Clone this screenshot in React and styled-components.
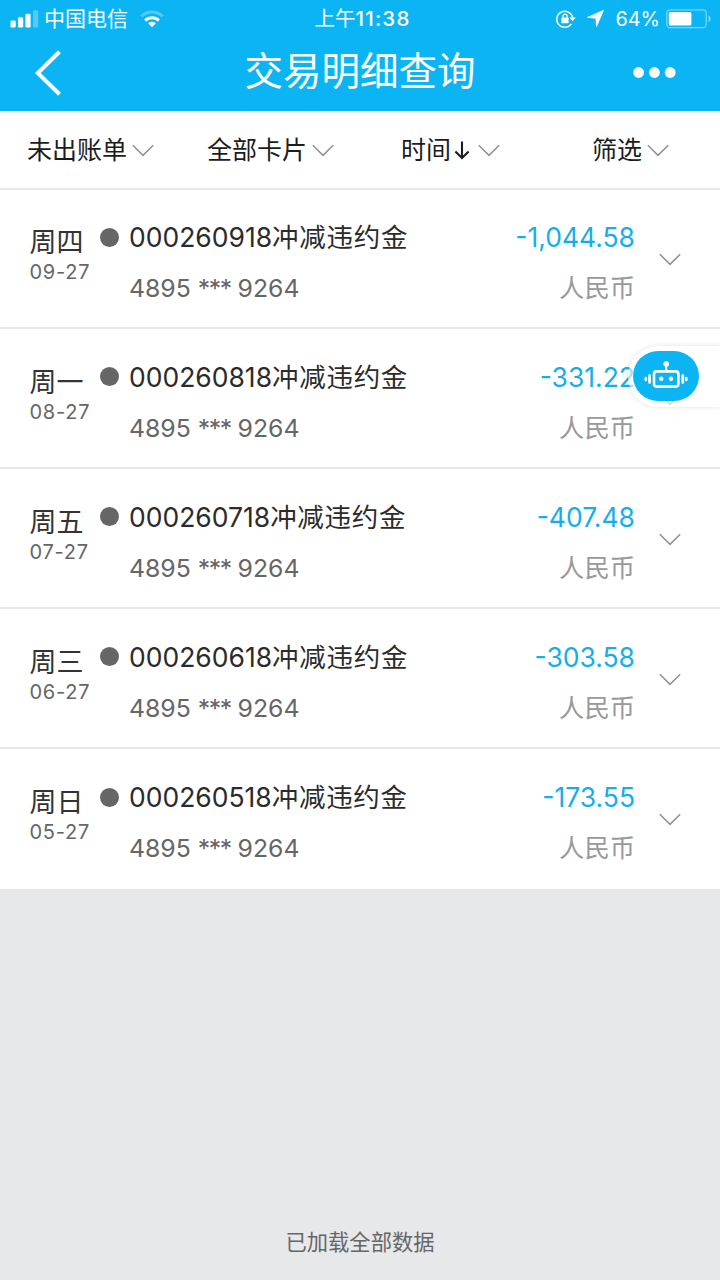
import React from 'react';
import styled, { createGlobalStyle } from 'styled-components';

const BLUE = '#0bb5f3';

const GlobalStyle = createGlobalStyle`
  * {
    box-sizing: border-box;
  }
  body {
    margin: 0;
    background: #e7e8ea;
    font-family: Inter, "Noto Sans CJK SC", sans-serif;
  }
  svg {
    display: block;
    flex: none;
  }
`;

const Screen = styled.div`
  position: relative;
  display: flex;
  flex-direction: column;
  width: 720px;
  height: 1280px;
  overflow: hidden;
  white-space: nowrap;
`;

const Header = styled.header`
  height: 111px;
  background: ${BLUE};
  color: #fff;
`;

const StatusBar = styled.div`
  display: grid;
  grid-template-columns: 1fr auto 1fr;
  align-items: center;
  height: 36px;
  padding: 0 9px 0 10px;
`;

const StatusGroup = styled.div`
  display: flex;
  align-items: center;
  height: 36px;
  line-height: 36px;
  justify-content: ${(props) => (props.$end ? 'flex-end' : 'flex-start')};
`;

const Carrier = styled.span`
  margin: 1px 12px 0 5px;
  font-size: 21px;
`;

const Clock = styled.div`
  padding: 1px 0 0 4px;
  font-size: 20.5px;
  line-height: 36px;
`;

const Digits = styled.span`
  font-weight: 500;
  letter-spacing: 1.2px;
`;

const Battery = styled.span`
  margin: 1px 6px 0 12px;
  font-size: 19.8px;
`;

const NavBar = styled.div`
  display: grid;
  grid-template-columns: 1fr auto 1fr;
  align-items: center;
  height: 74px;
  padding: 0 44px 0 34px;
`;

const Title = styled.h1`
  margin: 0 0 4px 10px;
  font-size: 38.5px;
  font-weight: 400;
  line-height: 60px;
`;

const NavEnd = styled.div`
  display: flex;
  justify-content: flex-end;
  padding-bottom: 2px;
`;

const FilterBar = styled.nav`
  display: flex;
  height: 77px;
  background: #fff;
`;

const Filter = styled.div`
  display: flex;
  flex: 1;
  align-items: center;
  justify-content: center;
  gap: 5px;
  padding: 1px 0 0 1px;
  color: #1c1c1c;
  font-size: 25px;
  line-height: 36px;
`;

const List = styled.ul`
  margin: 0;
  padding: 0;
  height: 701px;
  list-style: none;
  background: #fff;
`;

const Row = styled.li`
  display: flex;
  height: 140.2px;
  padding: 30px 39.5px 0 29.5px;
  border-top: 2px solid #e8e8e9;

  &:first-child {
    height: 138.6px;
    padding-top: 29px;
  }
`;

const Day = styled.div`
  width: 70.5px;
  padding-top: 6px;
`;

const Weekday = styled.div`
  color: #333;
  font-size: 27px;
  line-height: 36px;
`;

const DateText = styled.div`
  color: #666;
  font-size: 20px;
  letter-spacing: 0.75px;
  line-height: 22px;
`;

const Dot = styled.span`
  flex: none;
  width: 19px;
  height: 19px;
  margin: 8.5px 10px 0 0;
  border-radius: 50%;
  background: #666;
`;

const Detail = styled.div`
  flex: 1;
`;

const Name = styled.div`
  color: #2b2b2b;
  font-size: 26.5px;
  line-height: 36px;
`;

const Label = styled.span`
  letter-spacing: 0.7px;
`;

const Card = styled.div`
  margin-top: 15px;
  color: #666;
  font-size: 24.8px;
  line-height: 36px;
`;

const Mask = styled.span`
  letter-spacing: -1.5px;
`;

const Money = styled.div`
  text-align: right;
`;

const Amount = styled.div`
  color: #16aeea;
  font-size: 26.5px;
  line-height: 36px;
`;

const Currency = styled.div`
  margin-top: 15px;
  color: #999;
  font-size: 25.3px;
  line-height: 36px;
`;

const Expand = styled.div`
  padding-top: 34px;
  margin-left: 23.5px;
`;

const Footer = styled.footer`
  margin-top: auto;
  padding-bottom: 20px;
  color: #666;
  font-size: 21.3px;
  line-height: 36px;
  text-align: center;
`;

// Sits over the list, stuck to the right edge
const Assistant = styled.div`
  position: absolute;
  top: 346px;
  right: 0;
  width: 92px;
  height: 61px;
  padding: 5px;
  border-radius: 31px 0 0 31px;
  background: rgba(255, 255, 255, 0.6);
  box-shadow: 0 0 5px rgba(0, 0, 0, 0.12);
`;

const Bubble = styled.div`
  display: flex;
  align-items: center;
  justify-content: center;
  width: 66px;
  height: 50px;
  padding-bottom: 2px;
  border-radius: 25px;
  background: ${BLUE};
`;

const Chevron = () => (
  <svg width="22" height="13" viewBox="0 0 22 13" fill="none">
    <path d="M0.8 1.2 L11 11.4 L21.2 1.2" stroke="#8f9198" strokeWidth="1.5" />
  </svg>
);

const SortIcon = styled.svg`
  margin: 0 3px 0 -2px;
`;

const SortArrow = () => (
  <SortIcon width="16" height="20" viewBox="0 0 16 20" fill="none">
    <path d="M8 1.5 V18 M1.4 11.5 L8 18 L14.6 11.5" stroke="#1c1c1c" strokeWidth="2.1" />
  </SortIcon>
);

const SignalIcon = () => (
  <svg width="29" height="18" viewBox="0 0 29 18" fill="#fff">
    <rect x="0.5" y="10.5" width="5.2" height="7" rx="1.3" />
    <rect x="8" y="7.2" width="5.2" height="10.3" rx="1.3" />
    <rect x="15.4" y="3.7" width="5.2" height="13.8" rx="1.3" />
    <rect x="23" y="0.3" width="5.2" height="17.2" rx="1.3" opacity="0.3" />
  </svg>
);

const WifiIcon = () => (
  <svg width="24" height="18" viewBox="0 0 24 18" fill="none" stroke="#fff" strokeWidth="3">
    <path d="M1.3 6.5 A15.2 15.2 0 0 1 22.7 6.5" opacity="0.3" />
    <path d="M5.2 10.6 A9.6 9.6 0 0 1 18.8 10.6" />
    <path d="M12 17.2 L8.1 13.3 A5.5 5.5 0 0 1 15.9 13.3 Z" fill="#fff" stroke="none" />
  </svg>
);

const RotationLockIcon = () => (
  <svg width="20" height="18" viewBox="0 0 20 18" fill="none" stroke="#fff">
    <path d="M15.4 13.8 A8 8 0 1 1 16.6 7.8" strokeWidth="1.5" />
    <path d="M13.4 7.4 H19.8 L16.6 11.2 Z" fill="#fff" stroke="none" />
    <rect x="5.4" y="7.6" width="7.2" height="5.6" rx="0.7" fill="#fff" stroke="none" />
    <path d="M6.9 8 V6.3 A2.1 2.1 0 0 1 11.1 6.3 V8" strokeWidth="1.2" />
  </svg>
);

const PointerIcon = styled.svg`
  margin-left: 11px;
`;

const LocationIcon = () => (
  <PointerIcon width="17" height="17" viewBox="0 0 17 17" fill="#fff">
    <path d="M16.4 0.4 L9.6 16.4 L8.9 8.2 L0.5 7.4 Z" stroke="#fff" strokeWidth="0.8" strokeLinejoin="round" />
  </PointerIcon>
);

const BatteryIcon = () => (
  <svg width="45" height="20" viewBox="0 0 45 20" fill="none">
    <rect x="0.8" y="0.8" width="39.4" height="17.9" rx="3.5" stroke="#fff" strokeOpacity="0.45" strokeWidth="1.3" />
    <rect x="2.8" y="3" width="22.6" height="13.5" rx="1.5" fill="#fff" />
    <path d="M42.6 6.5 C45.2 7.5 45.2 12 42.6 13 Z" fill="#fff" fillOpacity="0.5" />
  </svg>
);

const BackIcon = () => (
  <svg width="28" height="46" viewBox="0 0 28 46" fill="none">
    <path d="M25.5 1.8 L3.8 23 L25.5 44.2" stroke="#fff" strokeWidth="4" />
  </svg>
);

const MoreIcon = () => (
  <svg width="43" height="11" viewBox="0 0 43 11" fill="#fff">
    <circle cx="5.6" cy="5.5" r="5.4" />
    <circle cx="21.4" cy="5.5" r="5.4" />
    <circle cx="37.2" cy="5.5" r="5.4" />
  </svg>
);

const RobotIcon = () => (
  <svg width="44" height="28" viewBox="0 0 44 28" fill="none" stroke="#fff">
    <rect x="10" y="10.4" width="24.4" height="15.2" rx="2.5" strokeWidth="2.6" />
    <path d="M22.2 4 V10" strokeWidth="2" />
    <circle cx="22.2" cy="3" r="2.8" fill="#fff" stroke="none" />
    <circle cx="17.3" cy="17.8" r="2.2" fill="#fff" stroke="none" />
    <circle cx="27" cy="17.8" r="2.2" fill="#fff" stroke="none" />
    <path d="M5.6 14.6 V21.4 M38.8 14.6 V21.4" strokeWidth="2.8" strokeLinecap="round" />
    <path d="M1.8 17 V19 M42.3 17 V19" strokeWidth="2.6" strokeLinecap="round" />
  </svg>
);

const transactions = [
  { weekday: '周四', date: '09-27', code: '000260918', amount: '-1,044.58' },
  { weekday: '周一', date: '08-27', code: '000260818', amount: '-331.22' },
  { weekday: '周五', date: '07-27', code: '000260718', amount: '-407.48' },
  { weekday: '周三', date: '06-27', code: '000260618', amount: '-303.58' },
  { weekday: '周日', date: '05-27', code: '000260518', amount: '-173.55' },
];

function Transaction(props) {
  const { item } = props;
  return (
    <Row>
      <Day>
        <Weekday>{item.weekday}</Weekday>
        <DateText>{item.date}</DateText>
      </Day>
      <Dot />
      <Detail>
        <Name>
          {item.code}
          <Label>冲减违约金</Label>
        </Name>
        <Card>
          4895 <Mask>***</Mask> 9264
        </Card>
      </Detail>
      <Money>
        <Amount>{item.amount}</Amount>
        <Currency>人民币</Currency>
      </Money>
      <Expand>
        <Chevron />
      </Expand>
    </Row>
  );
}

function App() {
  return (
    <Screen>
      <GlobalStyle />
      <Header>
        <StatusBar>
          <StatusGroup>
            <SignalIcon />
            <Carrier>中国电信</Carrier>
            <WifiIcon />
          </StatusGroup>
          <Clock>
            上午
            <Digits>11:38</Digits>
          </Clock>
          <StatusGroup $end>
            <RotationLockIcon />
            <LocationIcon />
            <Battery>64%</Battery>
            <BatteryIcon />
          </StatusGroup>
        </StatusBar>
        <NavBar>
          <BackIcon />
          <Title>交易明细查询</Title>
          <NavEnd>
            <MoreIcon />
          </NavEnd>
        </NavBar>
      </Header>
      <FilterBar>
        <Filter>未出账单<Chevron /></Filter>
        <Filter>全部卡片<Chevron /></Filter>
        <Filter>时间<SortArrow /><Chevron /></Filter>
        <Filter>筛选<Chevron /></Filter>
      </FilterBar>
      <List>
        {transactions.map((item) => (
          <Transaction key={item.date} item={item} />
        ))}
      </List>
      <Footer>已加载全部数据</Footer>
      <Assistant>
        <Bubble>
          <RobotIcon />
        </Bubble>
      </Assistant>
    </Screen>
  );
}

export default App;
